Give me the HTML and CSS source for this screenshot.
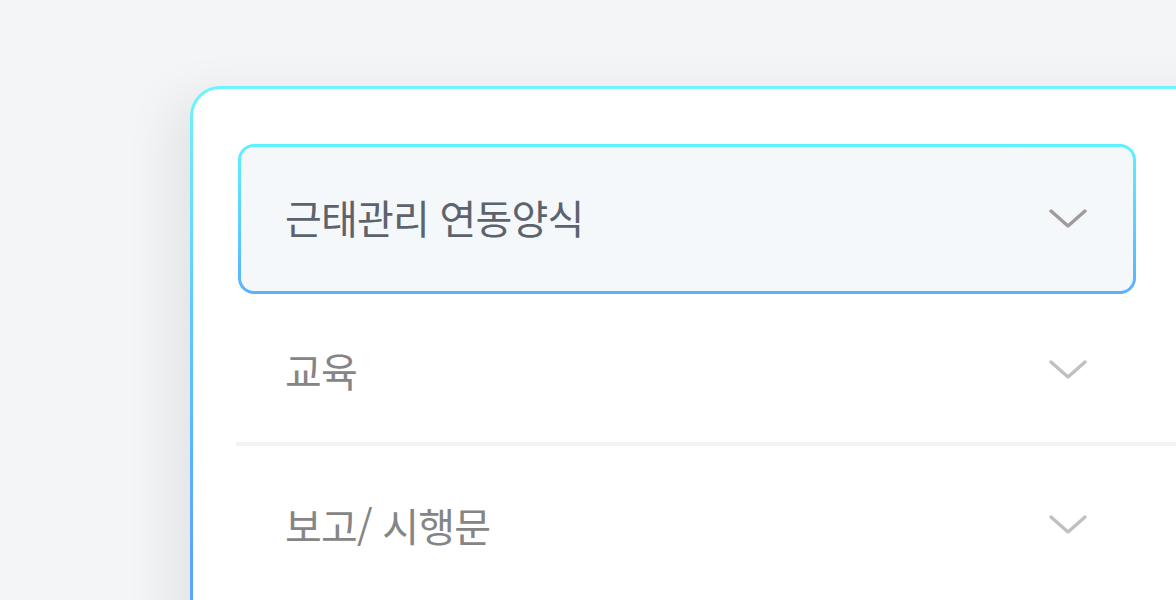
FILE: index.html
```html
<!DOCTYPE html>
<html lang="ko">
<head>
<meta charset="utf-8">
<link rel="stylesheet" href="styles.css">
</head>
<body>
<div class="card">
  <div class="list">
    <div class="item active">
      <span class="label">근태관리 연동양식</span>
      <svg class="chev" viewBox="0 0 38 20" width="38" height="20"><path d="M2 2 L19 17 L36 2" fill="none" stroke="currentColor" stroke-width="3.4" stroke-linecap="round" stroke-linejoin="round"/></svg>
    </div>
    <div class="item row">
      <span class="label">교육</span>
      <svg class="chev" viewBox="0 0 38 20" width="38" height="20"><path d="M2 2 L19 17 L36 2" fill="none" stroke="currentColor" stroke-width="3.4" stroke-linecap="round" stroke-linejoin="round"/></svg>
    </div>
    <div class="sep"></div>
    <div class="item row last">
      <span class="label">보고/ 시행문</span>
      <svg class="chev" viewBox="0 0 38 20" width="38" height="20"><path d="M2 2 L19 17 L36 2" fill="none" stroke="currentColor" stroke-width="3.4" stroke-linecap="round" stroke-linejoin="round"/></svg>
    </div>
  </div>
</div>
</body>
</html>
```

FILE: styles.css
```css
html, body {
  margin: 0;
  padding: 0;
  height: 100%;
  overflow: hidden;
}
body {
  background: #f4f5f7;
  font-family: "Noto Sans CJK KR", "Noto Sans", sans-serif;
}
.card {
  margin: 86px 0 0 190px;
  width: 1100px;
  height: 620px;
  box-sizing: border-box;
  border: 3px solid transparent;
  border-radius: 30px;
  background:
    linear-gradient(#ffffff, #ffffff) padding-box,
    linear-gradient(180deg, #6ef5ff 0%, #5bc8ff 40%, #5aa6ff 75%, #5a9eff 100%) border-box;
  box-shadow: -20px 10px 50px rgba(0, 0, 0, 0.07);
}
.list {
  padding: 55px 0 0 43px;
  display: flex;
  flex-direction: column;
}
.item {
  width: 898px;
  box-sizing: border-box;
  display: flex;
  align-items: center;
  justify-content: space-between;
  margin-left: 2px;
}
.active {
  height: 150px;
  padding: 0 46px 0 44px;
  border: 3px solid transparent;
  border-radius: 16px;
  background:
    linear-gradient(#f5f8fb, #f5f8fb) padding-box,
    linear-gradient(180deg, #5ef2ff 0%, #5ab0ff 100%) border-box;
}
.row {
  height: 148px;
  padding: 4px 49px 0 47px;
}
.row.last {
  padding-top: 10px;
}
.label {
  font-size: 40px;
  font-weight: 400;
  letter-spacing: -0.8px;
  color: #858585;
  line-height: 1;
}
.active .label {
  color: #5c636d;
  padding-bottom: 5px;
}
.chev {
  color: #c0c0c0;
  display: block;
}
.active .chev {
  color: #a09a9a;
}
.sep {
  height: 4px;
  background: #f2f3f5;
  margin-right: -20px;
}
```
